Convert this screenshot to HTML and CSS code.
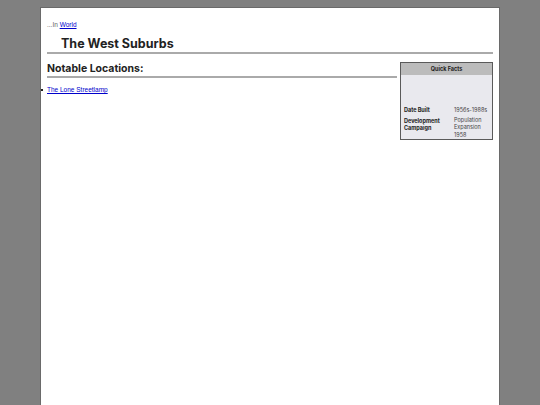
FILE: index.html
```html
<!DOCTYPE html>
<html>
<head>
<meta charset="utf-8">
<link rel="stylesheet" href="styles.css">
</head>
<body>
<div class="page">
  <div class="crumb">...In <a href="#">World</a></div>
  <h1 class="title">The West Suburbs</h1>
  <div class="content">
    <div class="main">
      <h2 class="section">Notable Locations:</h2>
      <ul class="list">
        <li><a href="#">The Lone Streetlamp</a></li>
      </ul>
    </div>
    <aside class="infobox">
      <div class="ib-head">Quick Facts</div>
      <div class="ib-image"></div>
      <table class="ib-table">
        <tr><th>Date Built</th><td>1956s-1988s</td></tr>
        <tr class="last"><th>Development Campaign</th><td>Population Expansion 1958</td></tr>
      </table>
    </aside>
  </div>
</div>
</body>
</html>
```
FILE: styles.css
```css
html, body { margin: 0; padding: 0; }
body {
  background: #808080;
  font-family: "Liberation Sans", Arial, sans-serif;
  height: 405px;
  overflow: hidden;
}
.page {
  box-sizing: border-box;
  width: 460px;
  margin: 7px auto 0;
  min-height: 398px;
  background: #fff;
  border: 1px solid #6a6a6a;
  border-bottom: none;
  padding: 13px 6px 0 6px;
}
.crumb {
  font-size: 6.5px;
  color: #666;
}
.crumb a { color: #0000cc; font-weight: 500; }
.title {
  font-family: Inter, "Liberation Sans", sans-serif;
  font-weight: 700;
  font-size: 12.5px;
  color: #222;
  margin: 8px 0 0;
  padding: 0 0 0 14px;
  border-bottom: 2px solid #aaa;
  line-height: 16px;
}
.content {
  display: flex;
  align-items: flex-start;
  gap: 3px;
  margin-top: 8px;
}
.main { flex: 1; }
.section {
  font-family: Inter, "Liberation Sans", sans-serif;
  font-weight: 700;
  font-size: 10.5px;
  color: #222;
  margin: 0;
  line-height: 13px;
  padding-bottom: 1px;
  border-bottom: 2px solid #aaa;
}
.list {
  margin: 8px 0 0;
  padding: 0;
  list-style: none;
  font-size: 6.5px;
}
.list li { position: relative; }
.list li::before {
  content: "";
  position: absolute;
  left: -6px;
  top: 3px;
  width: 2px;
  height: 2px;
  background: #222;
}
.list a { color: #0000cc; }
.infobox {
  width: 91px;
  border: 1px solid #5a5a5a;
  background: #e9e9ee;
  font-family: Inter, "Liberation Sans", sans-serif;
  font-size: 5.5px;
  color: #222;
}
.ib-head {
  background: #bcbcbc;
  text-align: center;
  font-weight: 700;
  height: 12px;
  line-height: 12px;
}
.ib-image { height: 31px; }
.ib-table {
  border-collapse: collapse;
  width: 100%;
}
.ib-table th {
  text-align: left;
  vertical-align: top;
  font-weight: 700;
  padding: 1px 2px 1px 3px;
  width: 46px;
  line-height: 7px;
}
.ib-table td {
  padding: 1px 2px;
  line-height: 7.5px;
  color: #444;
}
.ib-table .last th { padding-top: 2.5px; }
.ib-table .last td { padding-bottom: 0; }
```
